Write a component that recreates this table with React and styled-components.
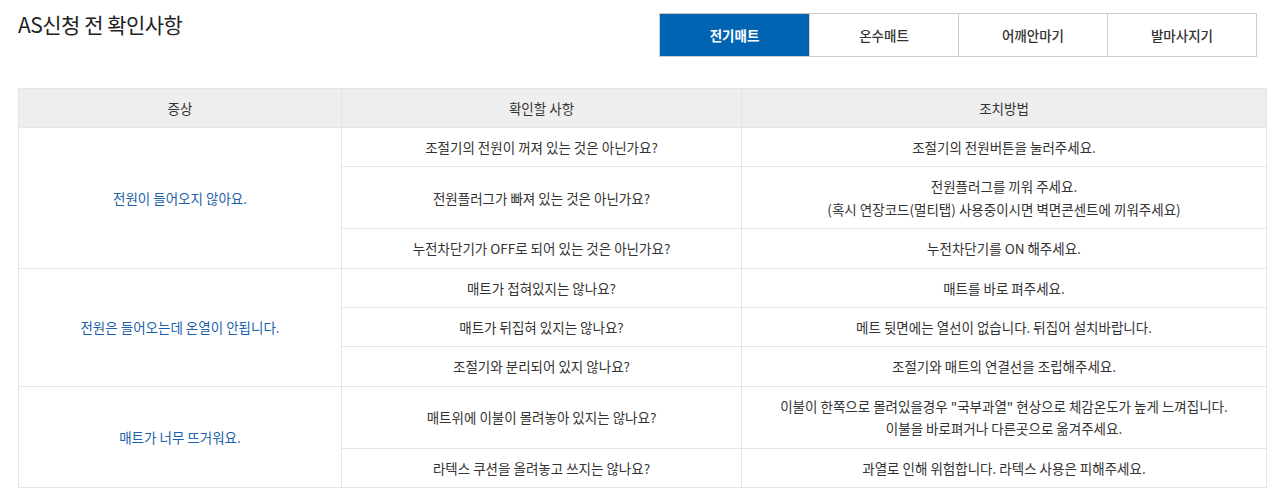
import React, { useState } from "react";
import styled, { createGlobalStyle } from "styled-components";

const GlobalStyle = createGlobalStyle`
    body {
        margin: 0;
        background: #fff;
        font-family: "Noto Sans CJK KR", "Liberation Sans", sans-serif;
        color: #333;
    }
`

const Page = styled.div`
    width: 1286px;
    padding: 12px 19px 0 18px;
    box-sizing: border-box;
`

const Head = styled.div`
    display: flex;
    justify-content: space-between;
    align-items: flex-start;
    padding-right: 10px;
`

const Title = styled.h2`
    margin: 0;
    font-size: 21px;
    font-weight: 400;
    line-height: 24px;
    color: #222;
    letter-spacing: -0.5px;
`

const Tabs = styled.div`
    display: flex;
    border: 1px solid #ccc;
    margin-top: 1px;
`

const Tab = styled.button`
    width: 149px;
    height: 42px;
    border: 0;
    border-left: 1px solid #ccc;
    background: ${({ $active }) => ($active ? "#0064b2" : "#fff")};
    color: ${({ $active }) => ($active ? "#fff" : "#333")};
    font-family: inherit;
    font-size: 13.5px;
    font-weight: ${({ $active }) => ($active ? 700 : 500)};
    cursor: pointer;
    padding: 0;

    &:first-child {
        border-left: 0;
    }
`

const Table = styled.table`
    width: 1249px;
    margin-top: 31px;
    border-collapse: collapse;
    table-layout: fixed;
    font-size: 13.5px;
`

const Th = styled.th`
    height: 38px;
    background: #eee;
    border: 1px solid #e5e5e5;
    font-weight: 400;
    color: #333;
    padding: 0;
`

const Td = styled.td`
    border: 1px solid #e5e5e5;
    text-align: center;
    padding: 8px 10px;
    line-height: 22.4px;
    color: ${({ $symptom }) => ($symptom ? "#1b5fab" : "#333")};
`

const tabs = ["전기매트", "온수매트", "어깨안마기", "발마사지기"];

const groups = [
    {
        symptom: "전원이 들어오지 않아요.",
        rows: [
            ["조절기의 전원이 꺼져 있는 것은 아닌가요?", ["조절기의 전원버튼을 눌러주세요."]],
            ["전원플러그가 빠져 있는 것은 아닌가요?", ["전원플러그를  끼워 주세요.", "(혹시 연장코드(멀티탭) 사용중이시면 벽면콘센트에 끼워주세요)"]],
            ["누전차단기가 OFF로 되어 있는 것은 아닌가요?", ["누전차단기를 ON 해주세요."]],
        ],
    },
    {
        symptom: "전원은 들어오는데 온열이 안됩니다.",
        rows: [
            ["매트가 접혀있지는 않나요?", ["매트를 바로 펴주세요."]],
            ["매트가 뒤집혀 있지는 않나요?", ["메트 뒷면에는 열선이 없습니다. 뒤집어 설치바랍니다."]],
            ["조절기와 분리되어 있지 않나요?", ["조절기와 매트의 연결선을 조립해주세요."]],
        ],
    },
    {
        symptom: "매트가 너무 뜨거워요.",
        rows: [
            ["매트위에 이불이 몰려놓아 있지는 않나요?", ["이불이 한쪽으로 몰려있을경우 \"국부과열\" 현상으로 체감온도가 높게 느껴집니다.", "이불을 바로펴거나 다른곳으로 옮겨주세요."]],
            ["라텍스 쿠션을 올려놓고 쓰지는 않나요?", ["과열로 인해 위험합니다. 라텍스 사용은 피해주세요."]],
        ],
    },
];

const App = () => {
    const [active, setActive] = useState(0);

    return (
        <>
        <GlobalStyle />
        <Page>
            <Head>
                <Title>AS신청 전 확인사항</Title>
                <Tabs>
                    {tabs.map((t, i) => (
                        <Tab key={t} $active={i === active} onClick={() => setActive(i)}>{t}</Tab>
                    ))}
                </Tabs>
            </Head>
            <Table>
                <colgroup>
                    <col style={{ width: 323 }} />
                    <col style={{ width: 400 }} />
                    <col />
                </colgroup>
                <thead>
                    <tr>
                        <Th>증상</Th>
                        <Th>확인할 사항</Th>
                        <Th>조치방법</Th>
                    </tr>
                </thead>
                <tbody>
                    {groups.map((g) =>
                        g.rows.map(([check, fix], i) => (
                            <tr key={check}>
                                {i === 0 && <Td $symptom rowSpan={g.rows.length}>{g.symptom}</Td>}
                                <Td>{check}</Td>
                                <Td>
                                    {fix.map((line, j) => (
                                        <React.Fragment key={j}>
                                            {j > 0 && <br />}
                                            {line}
                                        </React.Fragment>
                                    ))}
                                </Td>
                            </tr>
                        ))
                    )}
                </tbody>
            </Table>
        </Page>
        </>
    )
}

export default App
